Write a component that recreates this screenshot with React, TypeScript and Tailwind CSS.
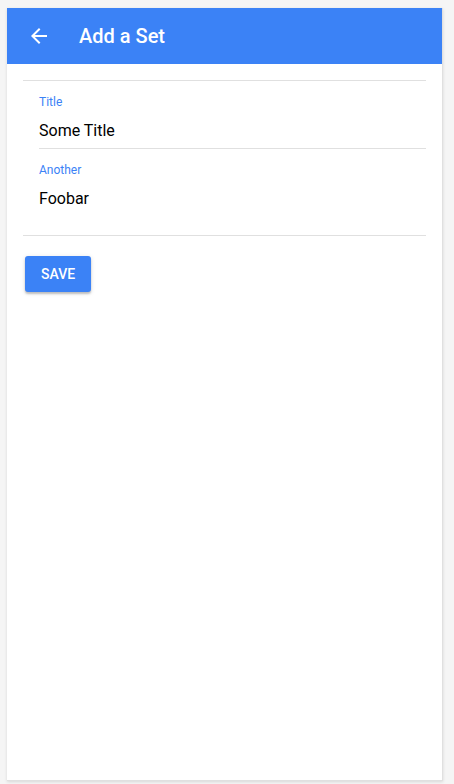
const fields = [
  { label: 'Title', value: 'Some Title' },
  { label: 'Another', value: 'Foobar' },
];

function BackIcon() {
  return (
    <svg width="24" height="24" viewBox="0 0 24 24" fill="currentColor" className="shrink-0">
      <path d="M20 11H7.83l5.59-5.59L12 4l-8 8 8 8 1.41-1.41L7.83 13H20v-2z" />
    </svg>
  );
}

export default function App() {
  return (
    <div
      className="min-h-[784px] bg-[#f5f5f5] pt-2 pl-[7px] pr-[11px]"
      style={{ fontFamily: 'Roboto, "Noto Sans", sans-serif' }}
    >
      <div className="h-[773px] bg-white border-r border-b border-[#e0e0e0] shadow-[0_1px_3px_rgba(0,0,0,0.12)]">
        {/* App bar */}
        <header className="h-14 bg-[#3b82f6] text-white flex items-center pl-5">
          <BackIcon />
          <h1 className="ml-7 text-[20px] leading-7 font-medium">Add a Set</h1>
        </header>

        {/* Form list */}
        <div className="mx-4 mt-4 border-t border-b border-[#e0e0e0] pb-[19px]">
          {fields.map((f, i) => (
            <div key={f.label} className="pl-4">
              <div
                className={`pt-[13px] pb-[5px] ${i < fields.length - 1 ? 'border-b border-[#e0e0e0]' : ''}`}
              >
                <div className="text-xs leading-4 text-[#3b82f6]">{f.label}</div>
                <div className="mt-[9px] text-base leading-6 text-black">{f.value}</div>
              </div>
            </div>
          ))}
        </div>

        <div className="pl-[18px] pt-5">
          <button className="h-9 px-4 rounded-[3px] bg-[#3b82f6] text-white text-sm font-medium uppercase shadow-[0_2px_2px_rgba(0,0,0,0.2),0_1px_5px_rgba(0,0,0,0.12)]">
            Save
          </button>
        </div>
      </div>
    </div>
  );
}
